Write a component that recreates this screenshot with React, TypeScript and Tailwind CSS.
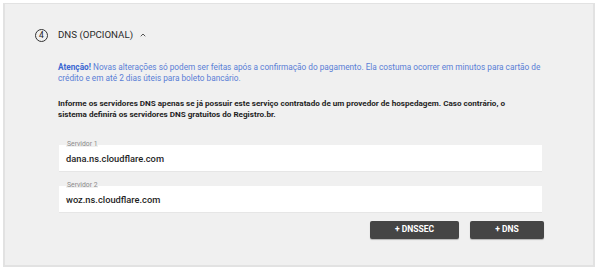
import React from 'react';
import { ChevronUp } from 'lucide-react';

interface ServerFieldProps {
  label: string;
  value: string;
}

const ServerField: React.FC<ServerFieldProps> = ({ label, value }) => (
  <div className="relative bg-white h-[26px] flex items-center pl-[7px] shadow-[0_1px_0_#e6e6e6]">
    <span className="absolute -top-[4px] left-[7px] text-[6.8px] leading-none text-[#8a8a8a] bg-[#f0f0f0] px-[1px]">
      {label}
    </span>
    <span className="text-[9.3px] font-medium text-[#1f1f1f] pt-[2px]">{value}</span>
  </div>
);

const App: React.FC = () => {
  return (
    <div className="w-[600px] h-[274px] bg-white pt-[3px] pl-[3px] pr-[5px] font-['Roboto',sans-serif]">
      <div className="h-[264px] bg-[#f0f0f0] border-l-2 border-t border-r-2 border-b-2 border-[#e2e2e2]">
        <div className="flex items-center pt-[24px] pl-[30px]">
          <div className="w-[13px] h-[13px] rounded-full border border-[#333] flex items-center justify-center text-[8.5px] leading-none text-[#222]">
            4
          </div>
          <span className="ml-[10px] text-[9.7px] text-[#2a2a2a]">DNS (OPCIONAL)</span>
          <ChevronUp size={8} strokeWidth={3} className="ml-[6px] text-[#555]" />
        </div>

        <div className="pl-[53px] pr-[46px]">
          <p className="mt-[19.5px] text-[8.25px] leading-[11px] text-[#5a7ed6]">
            <span className="font-bold text-[#3b67d2]">Atenção!</span> Novas alterações só podem ser feitas após a confirmação do pagamento. Ela costuma ocorrer em minutos para cartão de crédito e em até 2 dias úteis para boleto bancário.
          </p>
          <p className="mt-[14px] pr-[12px] text-[8.1px] leading-[11px] font-bold text-[#1e1e1e]">
            Informe os servidores DNS apenas se já possuir este serviço contratado de um provedor de hospedagem. Caso contrário, o sistema definirá os servidores DNS gratuitos do Registro.br.
          </p>
        </div>

        <div className="pl-[54px] pr-[51px] mt-[24.5px] flex flex-col gap-[15px]">
          <ServerField label="Servidor 1" value="dana.ns.cloudflare.com" />
          <ServerField label="Servidor 2" value="woz.ns.cloudflare.com" />
        </div>

        <div className="flex justify-end gap-[11px] pr-[49px] mt-[9px]">
          <button className="w-[89px] h-[18px] rounded-[2px] bg-[#454545] text-white text-[8.5px] font-bold shadow-[0_1px_1px_rgba(0,0,0,0.25)]">
            + DNSSEC
          </button>
          <button className="w-[74px] h-[18px] rounded-[2px] bg-[#454545] text-white text-[8.5px] font-bold shadow-[0_1px_1px_rgba(0,0,0,0.25)]">
            + DNS
          </button>
        </div>
      </div>
    </div>
  );
};

export default App;
